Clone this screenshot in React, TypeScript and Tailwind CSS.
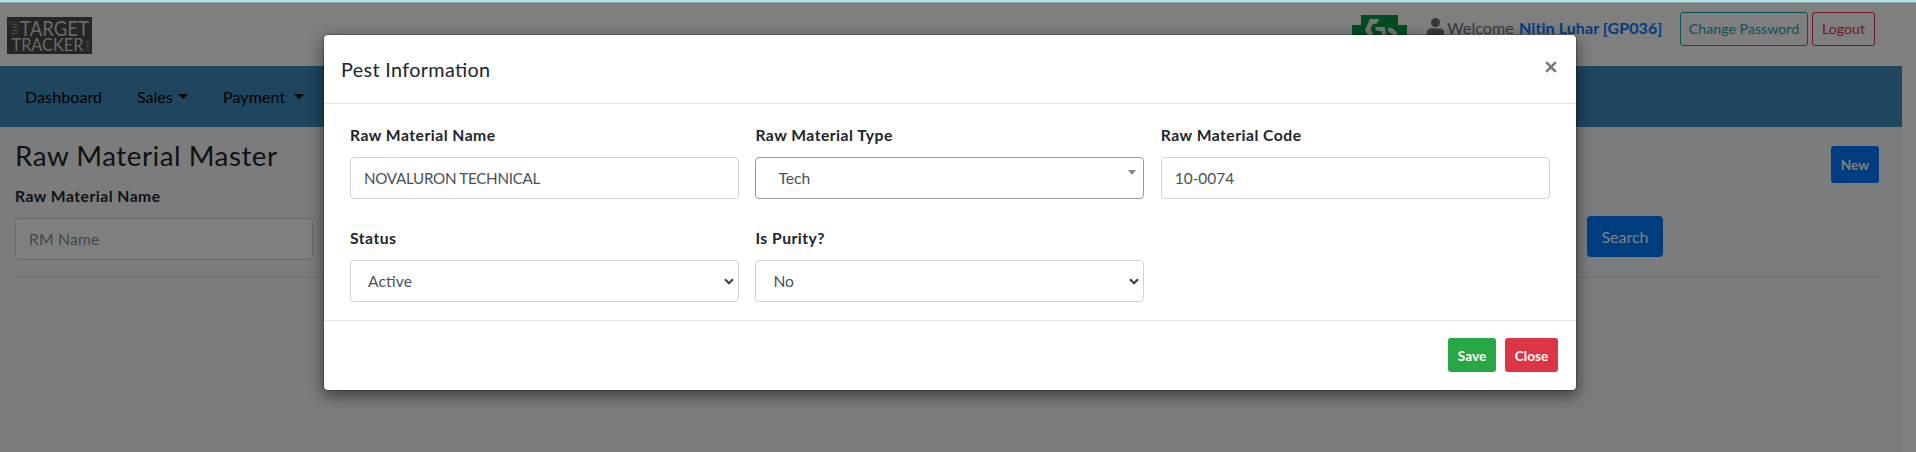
import type { ReactNode } from "react";

function Caret() {
  return <span className="inline-block border-x-[5px] border-t-[5px] border-x-transparent border-t-black" />;
}

function Logo() {
  return (
    <svg className="mt-[14px] bg-[#4a4a48] font-['Lato',sans-serif]" width="85" height="37" viewBox="0 0 85 37">
      <text x="13" y="18.6" textLength="69" lengthAdjust="spacingAndGlyphs" fontSize="20.5" fill="#d4d4d4">TARGET</text>
      <text x="4.5" y="34.3" textLength="72" lengthAdjust="spacingAndGlyphs" fontSize="18" fill="#d4d4d4">TRACKER</text>
      <text transform="translate(10.5 19) rotate(-90)" textLength="15" lengthAdjust="spacingAndGlyphs" fontSize="8" fill="#b09a70">THE</text>
      <text transform="translate(82 35) rotate(-90)" textLength="12" lengthAdjust="spacingAndGlyphs" fontSize="5" fill="#b09a70">.com</text>
    </svg>
  );
}

function Chevron() {
  return (
    <svg className="ml-auto" width="10" height="7" viewBox="0 0 10 7" fill="none" stroke="#3b4046" strokeWidth="2.2">
      <path d="M1 1.2 5 5.2 9 1.2" />
    </svg>
  );
}

function Field({ label, children }: { label: string; children: ReactNode }) {
  return (
    <div className="w-[389px]">
      <div className="h-[34px] text-[15.7px] leading-[25px] font-bold tracking-[0.48px] text-[#212529]">{label}</div>
      {children}
    </div>
  );
}

const box = "flex h-[42px] items-center rounded-[4px] border bg-white pt-px text-[#495057]";

export default function App() {
  return (
    <div className="relative h-[452px] w-[1916px] overflow-hidden bg-white font-['Lato',sans-serif] text-[#212529]">
      <div className="flex h-[66px] pl-[7px] pt-[3px]">
        <Logo />
        <svg className="ml-[1260px] mt-[12px]" width="55" height="40" viewBox="0 0 55 40">
          <path d="M9 0H46V10H55V40H0V10H9Z" fill="#009a43" />
          <path d="M18 4H27.5L25 8.5L20.5 9.5L18.5 14L22 21V26L17 22L13 15Z" fill="#e8ece8" />
          <path d="M23 12H33L34.5 24H31L29.5 16H25Z" fill="#e8ece8" />
          <path d="M35.5 12.5L41 13.5L44.5 17L46.5 24H42L40.5 19L36.5 17Z" fill="#e8ece8" />
        </svg>
        <svg className="ml-[20px] mt-[15px]" width="17" height="18" viewBox="0 0 17 18" fill="#6c757d">
          <circle cx="8.5" cy="4.5" r="4.5" />
          <path d="M0 18V14.5Q0 10.5 4 10.5H13Q17 10.5 17 14.5V18Z" />
        </svg>
        <div className="ml-[3px] mt-[13px] w-[71px] text-[16.2px] leading-[24px] text-[#6c757d]">Welcome</div>
        <div className="ml-px mt-[13px] w-[161px] whitespace-nowrap text-[16px] leading-[24px] font-bold tracking-[0.08px] text-[#007bff]">Nitin Luhar [GP036]</div>
        <div className="mt-[9px] flex h-[34px] w-[128px] items-center justify-center rounded-[3px] border border-[#17a2b8] text-[14.2px] text-[#17a2b8]">Change Password</div>
        <div className="ml-[4px] mt-[9px] flex h-[34px] w-[63px] items-center justify-center rounded-[3px] border border-[#dc3545] text-[14.2px] text-[#dc3545]">Logout</div>
      </div>

      <div className="h-[386px] w-[1902px] bg-[#f6f8fa]">
        <div className="flex h-[61px] items-center bg-[#3f8dbf] pl-[25px] text-[16px] text-black">
          <span className="w-[112px] tracking-[0.1px]">Dashboard</span>
          <span className="flex w-[86px] items-center gap-[5px]">Sales <Caret /></span>
          <span className="flex items-center gap-[9px] tracking-[0.1px]">Payment <Caret /></span>
        </div>
        <div className="pl-[15px] pr-[18px]">
          <div className="flex h-[57px] justify-between pr-[5px]">
            <h1 className="pt-[10px] text-[27.8px] leading-[37px] tracking-[0.5px]">Raw Material Master</h1>
            <div className="mt-[19px] flex h-[37px] w-[48px] items-center justify-center rounded-[3px] bg-[#007bff] pt-[2px] text-[13.6px] font-bold text-white">New</div>
          </div>
          <div className="flex h-[94px] border-b border-[#dcdee0]">
            <div className="w-[298px]">
              <div className="h-[34px] text-[15.7px] leading-[25px] font-bold tracking-[0.48px]">Raw Material Name</div>
              <div className="flex h-[42px] items-center rounded-[4px] border border-[#ced4da] bg-white pl-[13px] pt-px text-[15.7px] tracking-[0.2px] text-[#868e96]">RM Name</div>
            </div>
            <div className="ml-[1274px] mt-[32px] flex h-[41px] w-[76px] items-center justify-center rounded-[4px] bg-[#007bff] text-[16px] text-white">Search</div>
          </div>
        </div>
      </div>

      <div className="absolute inset-0 bg-black/50 pl-[323px] pt-[34px]">
        <div className="h-[357px] w-[1254px] rounded-[5px] border border-black/20 bg-white bg-clip-padding shadow-[0_5px_15px_rgba(0,0,0,0.5)]">
          <div className="flex h-[69px] justify-between border-b border-[#e5e5e5] pl-[17px] pr-[19px]">
            <h2 className="pt-[19px] text-[19.8px] leading-[30px] tracking-[0.35px] [font-feature-settings:'liga'_1]">Pest Information</h2>
            <svg className="mt-[26px]" width="12" height="12" viewBox="0 0 12 12" stroke="#7a7a7a" strokeWidth="2.6">
              <path d="M1.2 1.2 10.8 10.8M10.8 1.2 1.2 10.8" />
            </svg>
          </div>
          <div className="grid h-[217px] grid-cols-[389px_389px_389px] gap-x-[16.4px] border-b border-[#e5e5e5] pl-[26px] pt-[19px] [grid-template-rows:103px_auto]">
            <Field label="Raw Material Name">
              <div className={box + " border-[#ced4da] pl-[13px] text-[15.2px] tracking-[-0.3px]"}>NOVALURON TECHNICAL</div>
            </Field>
            <Field label="Raw Material Type">
              <div className={box + " border-[#9a9a9a] pl-[22px] text-[15.7px]"}>
                Tech
                <span className="mb-[13px] ml-auto mr-[7px] border-x-[4px] border-t-[5px] border-x-transparent border-t-[#888]" />
              </div>
            </Field>
            <Field label="Raw Material Code">
              <div className={box + " border-[#ced4da] pl-[13px] text-[15.4px]"}>10-0074</div>
            </Field>
            <Field label="Status">
              <div className={box + " border-[#ced4da] pl-[17px] pr-[4px] text-[15.6px] tracking-[0.1px] [font-feature-settings:'liga'_1]"}>Active<Chevron /></div>
            </Field>
            <Field label="Is Purity?">
              <div className={box + " border-[#ced4da] pl-[17px] pr-[4px] text-[15.6px]"}>No<Chevron /></div>
            </Field>
          </div>
          <div className="flex justify-end gap-[9px] pr-[18px] pt-[17px] text-[13.6px] font-bold text-white">
            <div className="flex h-[34px] w-[48px] items-center justify-center rounded-[3px] bg-[#28a745] pt-[3px]">Save</div>
            <div className="flex h-[34px] w-[53px] items-center justify-center rounded-[3px] bg-[#dc3545] pt-[3px]">Close</div>
          </div>
        </div>
      </div>
      <div className="absolute inset-x-0 top-0 h-[3px] border-b border-[#8fa6a8] bg-[#b4e4e8]" />
    </div>
  );
}
